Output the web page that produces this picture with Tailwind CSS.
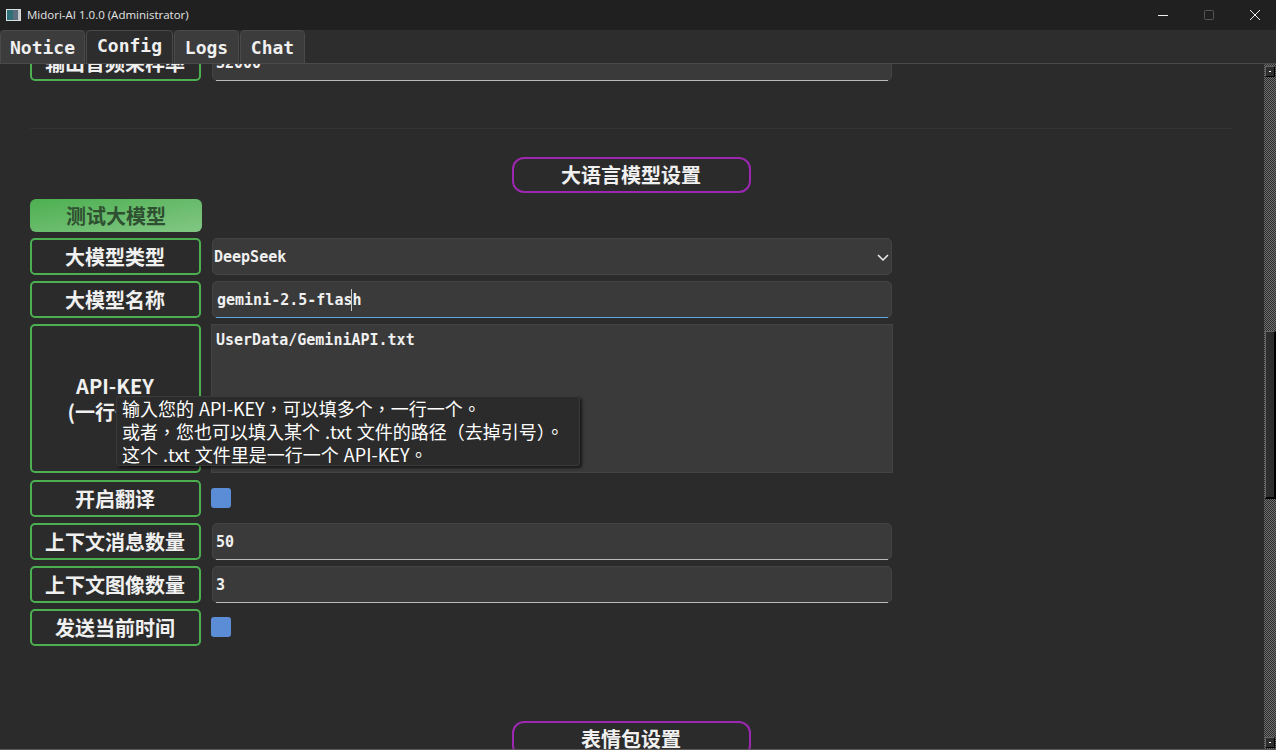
<!DOCTYPE html>
<html lang="en">
<head>
  <meta charset="UTF-8" />
  <title>Midori-AI 1.0.0 (Administrator)</title>
  <script src="https://cdn.jsdelivr.net/npm/@tailwindcss/browser@4"></script>
</head>
<body class="bg-[#2b2b2b] text-[#f0f0f0] font-['Noto_Sans_CJK_SC',sans-serif]">
<div class="relative flex flex-col w-[1276px] h-[750px] overflow-hidden">

  <!-- Title bar -->
  <div class="flex items-center justify-between h-[30px] shrink-0 bg-[#202020]">
    <div class="flex items-center">
      <svg class="ml-[6px] mr-[6px]" width="15" height="12" viewBox="0 0 15 12">
        <rect width="15" height="12" fill="#d8dde0"/>
        <rect x="1" y="1" width="6" height="10" fill="#2f6f78"/>
        <rect x="7" y="1" width="5" height="10" fill="#5b6f80"/>
        <rect x="12" y="1" width="2" height="10" fill="#c8c8c8"/>
      </svg>
      <span class="text-[11.5px] text-[#e4e4e4] font-['Open_Sans',sans-serif]">Midori-AI 1.0.0 (Administrator)</span>
    </div>
    <div class="flex items-center mr-[-2px]">
      <div class="flex justify-center w-[46px]"><svg width="10" height="10" viewBox="0 0 10 10"><path d="M0 5.5H10" stroke="#f0f0f0"/></svg></div>
      <div class="flex justify-center w-[46px]"><svg width="10" height="10" viewBox="0 0 10 10"><rect x="0.5" y="0.5" width="9" height="9" rx="1" fill="none" stroke="#555"/></svg></div>
      <div class="flex justify-center w-[46px]"><svg width="10" height="10" viewBox="0 0 10 10"><path d="M0 0L10 10M10 0L0 10" stroke="#f0f0f0"/></svg></div>
    </div>
  </div>

  <!-- Tabs -->
  <div class="relative z-10 flex gap-[1px] h-[34px] shrink-0 items-end bg-[#2d2d2d] border-b border-[#4a4a4a] font-['DejaVu_Sans_Mono',monospace] text-[18px] font-bold">
    <div class="flex items-center justify-center w-[85px] h-[33px] bg-[#3c3c3c] border border-b-0 border-[#4a4a4a] rounded-t-[5px]">Notice</div>
    <div class="flex items-center justify-center w-[87px] h-[33px] pb-[3px] bg-[#2d2d2d] border border-b-0 border-[#4a4a4a] rounded-t-[5px]">Config</div>
    <div class="flex items-center justify-center w-[65px] h-[33px] bg-[#3c3c3c] border border-b-0 border-[#4a4a4a] rounded-t-[5px]">Logs</div>
    <div class="flex items-center justify-center w-[65px] h-[33px] bg-[#3c3c3c] border border-b-0 border-[#4a4a4a] rounded-t-[5px]">Chat</div>
  </div>

  <!-- Scrolling settings page -->
  <div class="flex-1 flex min-h-0">
    <div class="flex-1 min-w-0 pl-[30px] overflow-hidden">
      <div class="flex gap-[11px] mt-[-20px] h-[37px]">
        <div class="flex items-center justify-center w-[171px] pr-px border-2 border-[#4caf50] rounded-[5px] text-[20px] font-bold">输出音频采样率</div>
        <div class="relative flex items-center w-[680px] pl-[3px] pt-[1px] bg-[#3a3a3a] border border-[#444] rounded-[5px] font-['DejaVu_Sans_Mono',monospace] text-[15px] font-bold">
          32000<span class="absolute bottom-[-1px] left-[3px] right-[3px] h-px bg-[#bbb]"></span>
        </div>
      </div>

      <div class="w-[1202px] h-px mt-[47px] bg-[#333]"></div>

      <div class="flex justify-center w-[1202px] mt-[28px]">
        <div class="flex items-center justify-center w-[239px] h-[36px] border-2 border-[#9c27b0] rounded-[12px] text-[20px] font-bold">大语言模型设置</div>
      </div>

      <div class="flex items-center justify-center w-[172px] h-[33px] mt-[6px] bg-gradient-to-br from-[#4caf50] to-[#81c784] rounded-[6px] text-[20px] font-bold text-[#2f4f31]">测试大模型</div>

      <div class="flex gap-[11px] h-[37px] mt-[6px]">
        <div class="flex items-center justify-center w-[171px] pr-px border-2 border-[#4caf50] rounded-[5px] text-[20px] font-bold">大模型类型</div>
        <div class="flex items-center justify-between w-[680px] pl-[1px] pr-[1px] pt-[1px] bg-[#3a3a3a] border border-[#444] rounded-[5px] font-['DejaVu_Sans_Mono',monospace] text-[15px] font-bold">
          DeepSeek
          <svg width="14" height="14" viewBox="0 0 14 14"><path d="M2 5L7 10L12 5" fill="none" stroke="#f0f0f0" stroke-width="1.5"/></svg>
        </div>
      </div>

      <div class="flex gap-[11px] h-[37px] mt-[6px]">
        <div class="flex items-center justify-center w-[171px] pr-px border-2 border-[#4caf50] rounded-[5px] text-[20px] font-bold">大模型名称</div>
        <div class="relative flex items-center w-[680px] pl-[4px] pt-[1px] bg-[#3a3a3a] border border-[#444] rounded-[5px] font-['DejaVu_Sans_Mono',monospace] text-[15px] font-bold">
          gemini-2.5-flas<span class="border-l border-[#ccc] ml-[-1px]">h</span>
          <span class="absolute bottom-[-1px] left-[3px] right-[3px] h-px bg-[#5aa9e6]"></span>
        </div>
      </div>

      <div class="flex gap-[10px] h-[149px] mt-[6px]">
        <div class="flex flex-col items-center justify-center w-[171px] pr-px border-2 border-[#4caf50] rounded-[5px] text-[20px] leading-[26px] font-bold">
          <span>API-KEY</span>
          <span>(一行一个)</span>
        </div>
        <div class="w-[682px] pl-[4px] pt-[4px] bg-[#3a3a3a] border border-[#444] font-['DejaVu_Sans_Mono',monospace] text-[15px] font-bold">UserData/GeminiAPI.txt</div>
      </div>

      <div class="flex items-center gap-[10px] h-[37px] mt-[7px]">
        <div class="flex items-center justify-center w-[171px] h-[37px] pr-px border-2 border-[#4caf50] rounded-[5px] text-[20px] font-bold">开启翻译</div>
        <div class="w-[20px] h-[20px] mb-[2px] bg-[#5b8dd6] rounded-[3px]"></div>
      </div>

      <div class="flex gap-[11px] h-[37px] mt-[6px]">
        <div class="flex items-center justify-center w-[171px] pr-px border-2 border-[#4caf50] rounded-[5px] text-[20px] font-bold">上下文消息数量</div>
        <div class="relative flex items-center w-[680px] pl-[3px] pt-[1px] bg-[#3a3a3a] border border-[#444] rounded-[5px] font-['DejaVu_Sans_Mono',monospace] text-[15px] font-bold">
          50<span class="absolute bottom-[-1px] left-[3px] right-[3px] h-px bg-[#bbb]"></span>
        </div>
      </div>

      <div class="flex gap-[11px] h-[37px] mt-[6px]">
        <div class="flex items-center justify-center w-[171px] pr-px border-2 border-[#4caf50] rounded-[5px] text-[20px] font-bold">上下文图像数量</div>
        <div class="relative flex items-center w-[680px] pl-[3px] pt-[1px] bg-[#3a3a3a] border border-[#444] rounded-[5px] font-['DejaVu_Sans_Mono',monospace] text-[15px] font-bold">
          3<span class="absolute bottom-[-1px] left-[3px] right-[3px] h-px bg-[#bbb]"></span>
        </div>
      </div>

      <div class="flex items-center gap-[10px] h-[37px] mt-[6px]">
        <div class="flex items-center justify-center w-[171px] h-[37px] pr-px border-2 border-[#4caf50] rounded-[5px] text-[20px] font-bold">发送当前时间</div>
        <div class="w-[20px] h-[20px] mb-[2px] bg-[#5b8dd6] rounded-[3px]"></div>
      </div>

      <div class="flex justify-center w-[1202px] mt-[75px]">
        <div class="flex items-center justify-center w-[239px] h-[36px] border-2 border-[#9c27b0] rounded-[12px] text-[20px] font-bold">表情包设置</div>
      </div>
    </div>

    <!-- Scrollbar -->
    <div class="flex flex-col w-[12px] shrink-0 bg-[repeating-conic-gradient(#6e6e6e_0_25%,#2d2d2d_0_50%)] bg-[length:2px_2px]">
      <div class="flex items-center justify-center h-[11px] mt-[2px] ml-px mr-[1px] bg-[#2d2d2d] border border-[#666] border-r-black border-b-black">
        <span class="w-[2px] h-px bg-white"></span>
      </div>
      <div class="h-[168px] mt-[254px] ml-px bg-[#2d2d2d] border border-[#666] border-r-black border-r-2 border-b-black border-b-2"></div>
      <div class="flex items-center justify-center h-[11px] mt-auto mb-[2px] ml-px mr-[1px] bg-[#2d2d2d] border border-[#666] border-r-black border-b-black">
        <span class="w-[2px] h-px bg-white"></span>
      </div>
    </div>
  </div>

  <!-- Tooltip over the API-KEY row -->
  <div lang="zh-TW" class="absolute z-20 left-[116px] top-[396px] w-[464px] h-[70px] pl-[5px] bg-[#2b2b2b] border border-[#3a3a3a] rounded-[3px] shadow-[2px_2px_3px_rgba(0,0,0,0.6)] font-['Noto_Sans_CJK_TC',sans-serif] text-[18px] leading-[23px] text-white whitespace-nowrap [word-spacing:1px]">
    <p>输入您的 API-KEY，可以填多个，一行一个。</p>
    <p>或者，您也可以填入某个 .txt 文件的路径（去掉引号）。</p>
    <p>这个 .txt 文件里是一行一个 API-KEY。</p>
  </div>

  <div class="absolute bottom-0 left-0 w-full h-px bg-[#5a5a5a]"></div>
</div>
</body>
</html>
